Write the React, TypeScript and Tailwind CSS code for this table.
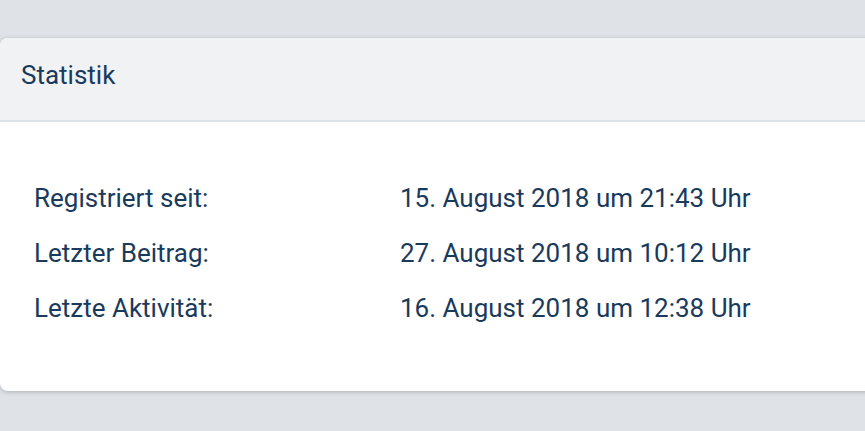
export default function App() {
  const rows = [
    ['Registriert seit:', '15. August 2018 um 21:43 Uhr'],
    ['Letzter Beitrag:', '27. August 2018 um 10:12 Uhr'],
    ['Letzte Aktivität:', '16. August 2018 um 12:38 Uhr'],
  ];

  return (
    <div
      className="min-h-[431px] bg-[#dfe3e7] pt-[38px] overflow-hidden text-[#1a3a5c]"
      style={{ fontFamily: 'Roboto, "Liberation Sans", sans-serif' }}
    >
      <div className="mr-[-24px] rounded-lg bg-white shadow-[0_1px_5px_rgba(0,0,0,0.22)] overflow-hidden">
        <div className="h-[84px] flex items-center px-[21px] pb-[8px] bg-[#f1f2f4] border-b-2 border-[#dde2e6] text-[26px]">
          Statistik
        </div>
        <div className="pt-[49px] pb-[55px] px-[34px]">
          {rows.map(([label, value]) => (
            <div key={label} className="flex items-center h-[55px] text-[26px]">
              <span className="w-[366px] shrink-0">{label}</span>
              <span className="whitespace-nowrap">{value}</span>
            </div>
          ))}
        </div>
      </div>
    </div>
  );
}
